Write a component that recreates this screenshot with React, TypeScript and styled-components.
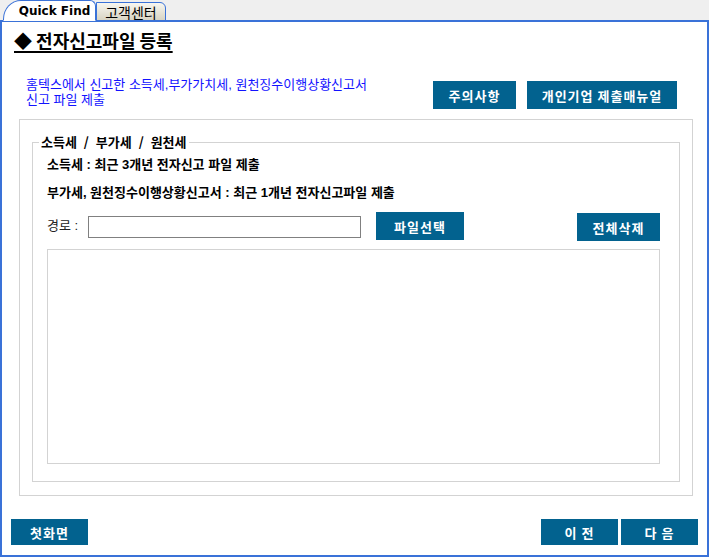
import styled, { createGlobalStyle } from 'styled-components'

const GlobalStyle = createGlobalStyle`
  html, body {
    margin: 0;
    padding: 0;
    background: #efefef;
  }
  body {
    font-family: 'Liberation Sans', 'Noto Sans CJK KR', sans-serif;
    font-size: 13px;
    color: #000;
  }
`

const BLUE_LINE = '#3a72d8'
const BTN = '#02628f'

function App() {
  return (
    <>
      <GlobalStyle />
      <Page>
        <TabBar>
          <Tab $active>Quick Find</Tab>
          <Tab>고객센터</Tab>
        </TabBar>
        <Panel>
          <Title>◆ 전자신고파일 등록</Title>
          <NoticeRow>
            <Notice>
              홈텍스에서 신고한 소득세,부가가치세, 원천징수이행상황신고서
              <br />
              신고 파일 제출
            </Notice>
            <ButtonGroup>
              <Button $w={83}>주의사항</Button>
              <Button $w={150}>개인기업 제출매뉴얼</Button>
            </ButtonGroup>
          </NoticeRow>
          <OuterBox>
            <Fieldset>
              <Legend>소득세 / 부가세 / 원천세</Legend>
              <InfoLine $gap={8}>소득세 : 최근 3개년 전자신고 파일 제출</InfoLine>
              <InfoLine $gap={12}>부가세, 원천징수이행상황신고서 : 최근 1개년 전자신고파일 제출</InfoLine>
              <PathRow>
                <PathLabel>경로 :</PathLabel>
                <PathInput type="text" />
                <Button $w={88} $h={28} style={{ marginLeft: 15 }}>파일선택</Button>
                <Spacer />
                <Button $w={83} $h={28} style={{ marginTop: 1 }}>전체삭제</Button>
              </PathRow>
              <FileList />
            </Fieldset>
          </OuterBox>
          <BottomRow>
            <Button $w={77} $h={26}>첫화면</Button>
            <NavGroup>
              <Button $w={77} $h={26}>이&nbsp;전</Button>
              <Button $w={77} $h={26}>다&nbsp;음</Button>
            </NavGroup>
          </BottomRow>
        </Panel>
      </Page>
    </>
  )
}

export default App

const Page = styled.div`
  width: 709px;
  height: 557px;
  display: flex;
  flex-direction: column;
  background: #efefef;
`

const TabBar = styled.div`
  height: 21px;
  display: flex;
  align-items: flex-end;
  padding-left: 3px;
  position: relative;
  z-index: 1;
  margin-bottom: -1px;
`

const Tab = styled.div<{ $active?: boolean }>`
  box-sizing: border-box;
  height: ${(p) => (p.$active ? '21px' : '19px')};
  display: flex;
  align-items: center;
  justify-content: center;
  border: 1px solid ${BLUE_LINE};
  border-bottom: ${(p) => (p.$active ? '1px solid #fff' : `1px solid ${BLUE_LINE}`)};
  color: #000;
  ${(p) =>
    p.$active
      ? `
    width: 93px;
    padding-left: 10px;
    background: #fff;
    border-radius: 18px 6px 0 0 / 19px 6px 0 0;
    font-weight: 700;
    font-size: 12px;
    font-family: 'DejaVu Sans', 'Liberation Sans', sans-serif;
  `
      : `
    width: 70px;
    background: linear-gradient(#f7f6f0, #d8d4c3);
    border-radius: 0 6px 0 0;
    font-size: 14px;
    font-family: 'Noto Sans CJK KR', sans-serif;
  `}
`

const Panel = styled.div`
  flex: 1;
  display: flex;
  flex-direction: column;
  background: #fff;
  border: 2px solid ${BLUE_LINE};
`

const Title = styled.div`
  margin: 7px 0 0 12px;
  font-family: 'Noto Sans CJK KR', sans-serif;
  font-size: 18px;
  font-weight: 700;
  line-height: 22px;
  text-decoration: underline;
  text-underline-offset: 3px;
  text-decoration-thickness: 2px;
`

const NoticeRow = styled.div`
  display: flex;
  justify-content: space-between;
  align-items: flex-start;
  margin: 26px 30px 0 24px;
`

const Notice = styled.div`
  color: #1212ff;
  line-height: 15px;
`

const ButtonGroup = styled.div`
  display: flex;
  gap: 11px;
  margin-top: 4px;
`

const Button = styled.button<{ $w: number; $h?: number }>`
  box-sizing: border-box;
  width: ${(p) => p.$w}px;
  height: ${(p) => p.$h ?? 28}px;
  padding: 0;
  border: none;
  background: ${BTN};
  color: #fff;
  font-family: 'Noto Sans CJK KR', sans-serif;
  font-size: 13px;
  font-weight: 700;
  letter-spacing: 1px;
  white-space: nowrap;
  cursor: pointer;
`

const OuterBox = styled.div`
  box-sizing: border-box;
  width: 674px;
  height: 377px;
  margin: 10px 0 0 17px;
  padding: 15px 12px 0;
  border: 1px solid #d3d3d3;
`

const Fieldset = styled.fieldset`
  box-sizing: border-box;
  height: 347px;
  margin: 0;
  padding: 0 19px 0 14px;
  border: 1px solid #d3d3d3;
  display: flex;
  flex-direction: column;
`

const Legend = styled.legend`
  margin-left: -8px;
  padding: 0 2px;
  font-family: 'Noto Sans CJK KR', sans-serif;
  font-size: 13px;
  font-weight: 700;
  line-height: 14px;
  word-spacing: 4px;
`

const InfoLine = styled.div<{ $gap?: number }>`
  margin-top: ${(p) => p.$gap ?? 3}px;
  font-weight: 700;
  line-height: 16px;
`

const PathRow = styled.div`
  display: flex;
  align-items: flex-start;
  margin-top: 11px;
`

const PathLabel = styled.span`
  width: 41px;
  margin-top: 6px;
  line-height: 16px;
  color: #222;
`

const PathInput = styled.input`
  box-sizing: border-box;
  width: 273px;
  height: 22px;
  margin: 4px 0 0;
  border: 1px solid #808080;
  padding: 0 3px;
`

const Spacer = styled.div`
  flex: 1;
`

const FileList = styled.div`
  box-sizing: border-box;
  height: 215px;
  margin-top: 8px;
  border: 1px solid #d3d3d3;
`

const BottomRow = styled.div`
  display: flex;
  justify-content: space-between;
  margin: 23px 9px 0 9px;
`

const NavGroup = styled.div`
  display: flex;
  gap: 3px;
`
